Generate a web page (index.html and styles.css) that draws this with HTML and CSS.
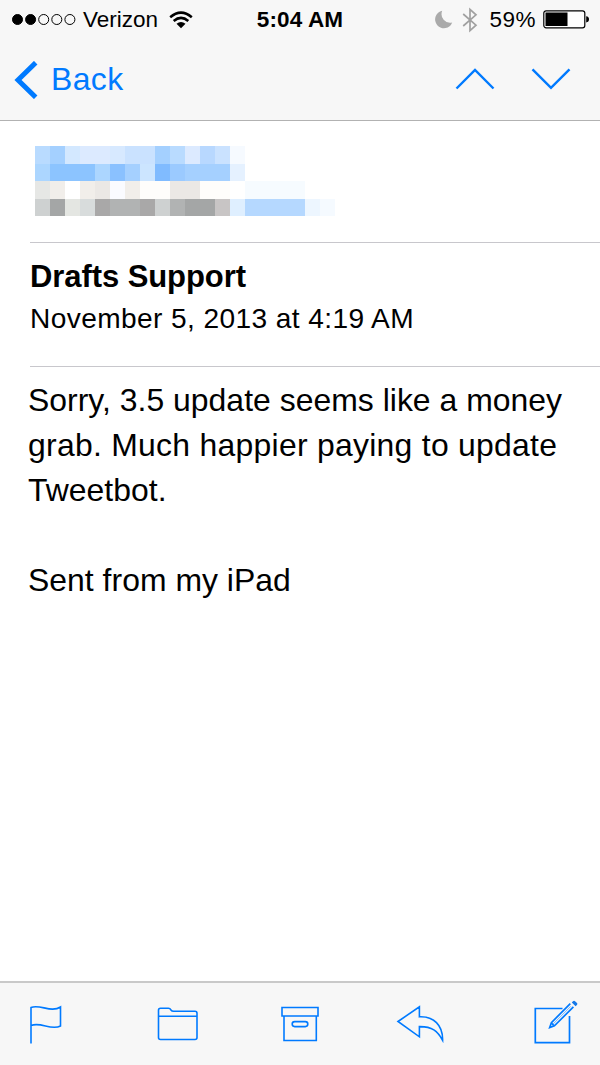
FILE: index.html
```html
<!DOCTYPE html>
<html lang="en">
<head>
<meta charset="utf-8">
<title>Mail</title>
<link rel="stylesheet" href="styles.css">
</head>
<body>
<div class="screen">
  <header class="top">
    <div class="status">
      <div class="status-left">
        <svg class="signal" width="64" height="14" viewBox="0 0 64 14"><g stroke="#000" stroke-width="1"><circle cx="5.5" cy="6.5" r="5"/><circle cx="18.6" cy="6.5" r="5"/><g fill="none"><circle cx="31.7" cy="6.5" r="5"/><circle cx="44.8" cy="6.5" r="5"/><circle cx="57.9" cy="6.5" r="5"/></g></g></svg>
        <span class="carrier">Verizon</span>
        <svg class="wifi" width="24" height="18" viewBox="0 0 24 18"><g fill="none" stroke="#000" stroke-width="2.5"><path d="M1.2 6.2Q12 -3 22.8 6.2"/><path d="M4.7 10Q12 3.8 19.3 10"/></g><path d="M7.5 12.8Q12 9 16.5 12.8L12 17.2Z"/></svg>
      </div>
      <div class="clock">5:04 AM</div>
      <div class="status-right">
        <svg class="moon" width="18" height="19" viewBox="0 0 18 19"><path d="M7.2 .8A8.8 8.8 0 1 0 17.2 12.4A8.6 8.6 0 0 1 7.2 .8Z" fill="#aaa"/></svg>
        <svg class="bluetooth" width="16" height="26" viewBox="0 0 16 26"><path d="M1.2 7L14 18.2L8 23.6V2.4L14 7.8L1.2 19" fill="none" stroke="#a0a0a0" stroke-width="1.7"/></svg>
        <span class="percent">59%</span>
        <svg class="battery" width="47" height="19" viewBox="0 0 47 19"><rect x=".8" y=".8" width="41" height="17" rx="2.3" fill="#fff" stroke="#000" stroke-width="1.2"/><path d="M2.5 2.5H24.5V16H2.5ZM43.2 6.3Q46 6.6 46 9.3T43.2 12.5Z"/></svg>
      </div>
    </div>
    <nav class="nav">
      <div class="back">
        <svg width="24" height="38" viewBox="0 0 24 38"><path d="M21.7 1.7L4 19L21.7 36.3" fill="none" stroke="#007aff" stroke-width="5"/></svg>
        <span class="back-label">Back</span>
      </div>
      <div class="arrows">
        <svg width="40" height="23" viewBox="0 0 40 23"><path d="M1.5 20.5L20 2L38.5 20.5" fill="none" stroke="#007aff" stroke-width="2.4"/></svg>
        <svg width="40" height="23" viewBox="0 0 40 23"><path d="M1.5 1.3L20 19.8L38.5 1.3" fill="none" stroke="#007aff" stroke-width="2.4"/></svg>
      </div>
    </nav>
  </header>
  <main class="message">
    <section class="people">
      <svg class="mosaic" width="300" height="70" viewBox="0 0 300 70" shape-rendering="crispEdges">
        <g>
          <path fill="#b9dbff" d="M0 0h15v18H0zM135 0h15v18h-15z"/><path fill="#a4d0ff" d="M15 0h15v18H15zM120 0h15v18h-15z"/>
          <path fill="#d3e8ff" d="M30 0h15v18H30z"/><path fill="#dceaff" d="M45 0h30v18H45zM150 0h15v18h-15z"/><path fill="#d7e9ff" d="M75 0h15v18H75z"/><path fill="#cae2ff" d="M90 0h30v18H90zM180 0h15v18h-15z"/><path fill="#b8d8ff" d="M165 0h15v18h-15z"/><path fill="#f6faff" d="M195 0h15v18h-15z"/>
        </g>
        <g>
          <path fill="#acd6ff" d="M0 18h15v17H0zM60 18h15v17H60z"/><path fill="#8cc4ff" d="M15 18h45v17H15z"/><path fill="#8ac1ff" d="M75 18h15v17H75z"/><path fill="#a5d0ff" d="M90 18h15v17H90zM150 18h45v17h-45z"/><path fill="#cce5ff" d="M105 18h15v17h-15z"/><path fill="#80bbff" d="M120 18h15v17h-15z"/><path fill="#9bcaff" d="M135 18h15v17h-15z"/><path fill="#e5f1ff" d="M195 18h15v17h-15z"/>
        </g>
        <g>
          <path fill="#e6e7e5" d="M0 35h15v18H0z"/><path fill="#f1eeea" d="M15 35h15v18H15zM45 35h15v18H45zM90 35h15v18H90z"/><path fill="#ebe8e5" d="M60 35h15v18H60zM135 35h30v18h-30z"/><path fill="#fafbff" d="M75 35h15v18H75z"/><path fill="#fefdfb" d="M105 35h30v18h-30zM165 35h30v18h-30z"/><path fill="#f6fbff" d="M210 35h60v18h-60z"/>
        </g>
        <g>
          <path fill="#ced1d1" d="M0 53h15v17H0zM120 53h15v17h-15z"/><path fill="#a4a6a6" d="M15 53h15v17H15zM150 53h30v17h-30z"/><path fill="#e4e6e2" d="M30 53h15v17H30z"/><path fill="#d8dcdc" d="M45 53h15v17H45z"/><path fill="#a9a8a8" d="M60 53h15v17H60zM105 53h15v17h-15z"/><path fill="#b1b3b3" d="M75 53h30v17H75zM135 53h15v17h-15z"/><path fill="#c8c5c5" d="M180 53h15v17h-15z"/><path fill="#dfefff" d="M195 53h15v17h-15z"/><path fill="#b5d8ff" d="M210 53h60v17h-60z"/><path fill="#edf6ff" d="M270 53h15v17h-15z"/><path fill="#f5faff" d="M285 53h15v17h-15z"/>
        </g>
      </svg>
    </section>
    <section class="subject">
      <h1 class="title">Drafts Support</h1>
      <p class="date">November 5, 2013 at 4:19 AM</p>
    </section>
    <article class="body">Sorry, 3.5 update seems like a money<br><span class="wide">grab. Much happier paying to update</span><br>Tweetbot.<br><br>Sent from my iPad</article>
  </main>
  <footer class="toolbar">
    <svg class="flag" width="34" height="40" viewBox="0 0 34 40"><path d="M2 39.5V3.5C11 0 22 9 31.5 3V22C22 27 12 17.5 2 21.5" fill="none" stroke="#007aff" stroke-width="1.6"/></svg>
    <svg class="folder" width="42" height="35" viewBox="0 0 42 35"><path d="M1.5 9.2H40M3.5 1.2H11.5Q13 1.2 14 3Q14.8 4.3 16.5 4.3H38Q40 4.3 40 6.3V30.5Q40 32.5 38 32.5H3.5Q1.5 32.5 1.5 30.5V3.2Q1.5 1.2 3.5 1.2Z" fill="none" stroke="#007aff" stroke-width="1.6"/></svg>
    <svg class="archive" width="40" height="37" viewBox="0 0 40 37"><g fill="none" stroke="#007aff" stroke-width="1.6"><path d="M2 1.5H38V10H2ZM4 10V34.5H36.3V10"/><rect x="12.2" y="15.6" width="15.6" height="5" rx="2.5"/></g></svg>
    <svg class="reply" width="50" height="40" viewBox="0 0 50 40"><path d="M2 17.5L23.4 2.8V12.8C37.6 12.2 47 21 46.6 36.3C41.6 27 36 22.4 23.4 22.6V32.8Z" fill="none" stroke="#007aff" stroke-width="1.6"/></svg>
    <svg class="compose" width="46" height="48" viewBox="0 0 46 48"><g fill="none" stroke="#007aff" stroke-width="1.7"><path d="M29.5 8.5H2.3V42.7H36.5V16"/><path d="M37.3 3.7L18.4 22.6L16.7 27.5L21.4 25.8L40.4 6.9"/><path d="M18.4 23L20.9 25.6"/><path d="M37.8 6.3L19.8 24.3" stroke-width=".5"/></g><path d="M38.8 2.5L40 1.3Q41 .3 42.3 1.4L44 3Q44.9 4.1 43.9 5.1L42.6 6.3Z" fill="#1679e8"/></svg>
  </footer>
</div>
</body>
</html>
```
FILE: styles.css
```css
* { box-sizing: border-box; }
body { margin: 0; font-family: "Liberation Sans", Arial, sans-serif; color: #000; background: #fff; }
svg { display: block; flex: none; }
.screen { width: 600px; height: 1065px; display: flex; flex-direction: column; overflow: hidden; white-space: nowrap; }
.top { height: 121px; background: #f7f7f7; border-bottom: 1px solid #b2b2b2; }
.status { height: 39px; display: grid; grid-template-columns: 1fr auto 1fr; align-items: center; font-size: 22.5px; line-height: 26px; }
.status-left { display: flex; align-items: center; padding-left: 12px; }
.carrier { margin-left: 7px; }
.wifi { margin-left: 11px; }
.clock { font-weight: bold; letter-spacing: 0.15px; }
.status-right { display: flex; align-items: center; justify-content: flex-end; padding-right: 10px; }
.bluetooth { margin-left: 9px; }
.percent { margin-left: 11px; letter-spacing: 0.5px; }
.battery { margin-left: 7px; }
.nav { height: 81px; display: flex; justify-content: space-between; align-items: center; padding: 0 29px 0 14px; }
.back { display: flex; align-items: center; color: #007aff; font-size: 31.9px; letter-spacing: 0.4px; }
.back-label { margin-left: 13px; }
.arrows { display: flex; gap: 36px; }
.message { flex: 1; }
.people { height: 122px; margin-left: 30px; padding: 25px 0 0 5px; border-bottom: 1px solid #c8c7cc; }
.subject { height: 124px; margin-left: 30px; padding-top: 15px; border-bottom: 1px solid #c8c7cc; }
.title { margin: 0; font-size: 31px; line-height: 38px; letter-spacing: -0.08px; }
.date { margin: 0; padding-top: 5px; font-size: 28.1px; line-height: 36px; letter-spacing: 0.4px; }
.body { padding: 11px 0 0 28px; font-size: 31.9px; line-height: 45px; letter-spacing: 0.03px; }
.wide { letter-spacing: 0.28px; }
.toolbar { height: 84px; display: flex; align-items: center; padding-left: 29px; background: #f7f7f7; border-top: 2px solid #c9c9c9; }
.folder { margin-left: 94px; }
.archive { margin-left: 81px; }
.reply { margin-left: 76px; }
.compose { margin-left: 87px; }
```
